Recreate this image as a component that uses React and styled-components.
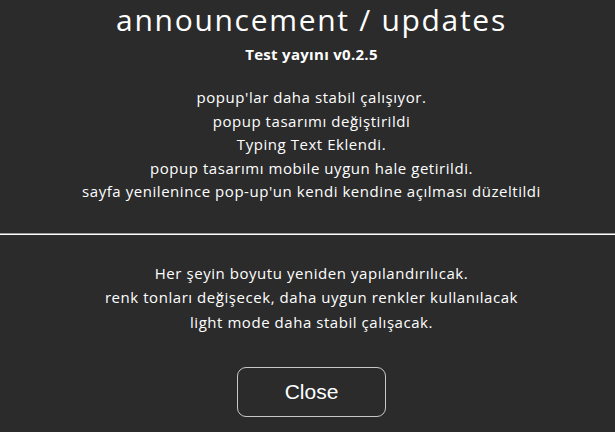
import React from 'react';
import styled, { createGlobalStyle } from 'styled-components';

const GlobalStyle = createGlobalStyle`
  html, body {
    margin: 0;
    padding: 0;
    background: #2b2b2b;
  }
  body {
    font-family: "Open Sans", "Noto Sans", sans-serif;
    color: #ffffff;
  }
`;

const Popup = styled.div`
  width: 615px;
  height: 432px;
  background: #2b2b2b;
  display: flex;
  flex-direction: column;
  overflow: hidden;
`;

const Section = styled.div`
  display: flex;
  flex-direction: column;
  align-items: center;
  padding-left: 8px;
`;

const Title = styled.h1`
  margin: 0;
  font-size: 30px;
  font-weight: 400;
  line-height: 40px;
  letter-spacing: 1.7px;
  white-space: nowrap;
`;

const Version = styled.h4`
  margin: 4px 0 0;
  font-size: 15px;
  font-weight: 700;
  line-height: 20px;
  letter-spacing: 0.3px;
`;

const Notes = styled.div`
  margin-top: ${(p) => p.$top}px;
  display: flex;
  flex-direction: column;
  align-items: center;
  font-size: 15px;
  letter-spacing: 0.55px;
  line-height: ${(p) => p.$lh}px;
  white-space: nowrap;
`;

const Divider = styled.hr`
  margin: 29px 0 0;
  border: none;
  border-top: 1px solid #9a9a9a;
  border-bottom: 1px solid #ffffff;
  width: 100%;
`;

const CloseButton = styled.button`
  margin-top: 33px;
  width: 149px;
  height: 50px;
  background: transparent;
  border: 1px solid #c8c8c8;
  border-radius: 9px;
  color: #ffffff;
  font-family: "Liberation Sans", Arial, sans-serif;
  font-size: 21px;
  cursor: pointer;
`;

const done = [
  "popup'lar daha stabil çalışıyor.",
  'popup tasarımı değiştirildi',
  'Typing Text Eklendi.',
  'popup tasarımı mobile uygun hale getirildi.',
  "sayfa yenilenince pop-up'un kendi kendine açılması düzeltildi",
];

const planned = [
  'Her şeyin boyutu yeniden yapılandırılıcak.',
  'renk tonları değişecek, daha uygun renkler kullanılacak',
  'light mode daha stabil çalışacak.',
];

export default function App() {
  return (
    <>
      <GlobalStyle />
      <Popup>
        <Section>
          <Title>announcement / updates</Title>
          <Version>Test yayını v0.2.5</Version>
          <Notes $top={22} $lh={23.5}>
            {done.map((line) => (
              <span key={line}>{line}</span>
            ))}
          </Notes>
        </Section>
        <Divider />
        <Section>
          <Notes $top={26} $lh={24.5}>
            {planned.map((line) => (
              <span key={line}>{line}</span>
            ))}
          </Notes>
          <CloseButton>Close</CloseButton>
        </Section>
      </Popup>
    </>
  );
}
